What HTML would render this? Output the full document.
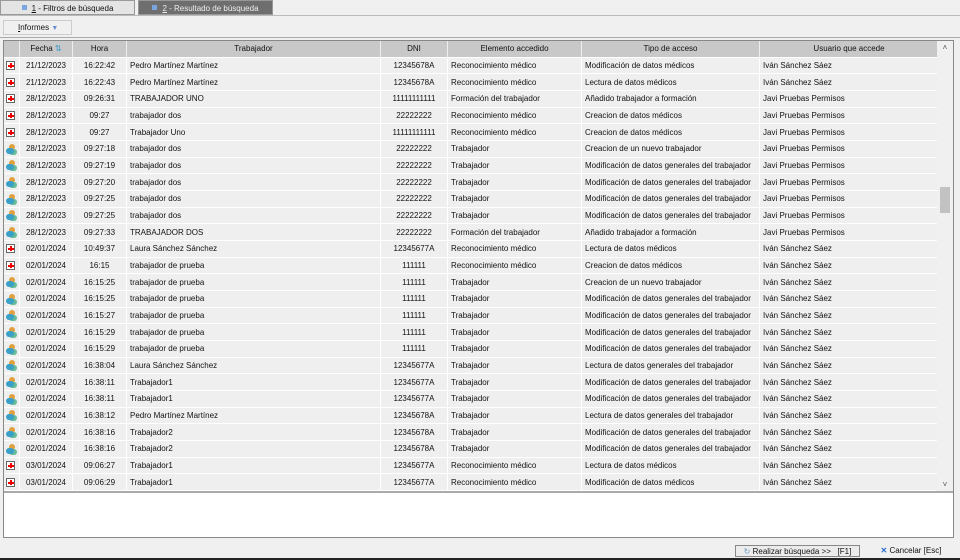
<!DOCTYPE html>
<html><head><meta charset="utf-8"><style>
*{box-sizing:border-box;margin:0;padding:0}
body{width:960px;height:560px;background:#f0f0f0;font-family:"Liberation Sans",sans-serif;font-size:8px;color:#111;position:relative;overflow:hidden}
.tab{position:absolute;top:0;height:15px;font-size:8px;line-height:15px;text-align:center;border:1px solid #999}
.sq{display:inline-block;width:5px;height:5px;background:#7aa6e0;margin-right:5px;vertical-align:1px}
#grid{position:absolute;left:3px;top:40px;width:951px;height:498px;border:1px solid #888;background:#fff}
table{border-collapse:collapse;position:absolute;left:0;top:0;table-layout:fixed}
th{background:#c8c8c8;font-weight:normal;height:16px;border-right:1px solid #eee;font-size:8px}
td{height:16.68px;background:#efefef;border-top:1px solid #fff;border-right:1px solid #fff;padding:0 3px;white-space:nowrap;overflow:hidden}
td.c{text-align:center}
.ic{width:9px;height:9px;border:1px solid #666;background:#fff;position:relative;margin-left:0}
.ic:before{content:"";position:absolute;left:3px;top:1px;width:2px;height:5px;background:#e00}
.ic:after{content:"";position:absolute;left:1px;top:3px;width:6px;height:2px;background:#e00}
.pp{width:11px;height:10px;position:relative}
.pp:before{content:"";position:absolute;left:3px;top:0;width:6px;height:6px;border-radius:3px;background:#e0a040}
.pp:after{content:"";position:absolute;left:0;top:4px;width:8px;height:6px;border-radius:3px;background:#3aa0c8;box-shadow:3px 1px 0 #6b9;}
</style></head><body>
<div class="tab" style="left:0;width:135px;background:#e4e4e4"><span class="sq"></span><u>1</u> - Filtros de búsqueda</div>
<div class="tab" style="left:138px;width:135px;background:#6e6e6e;color:#eee"><span class="sq"></span><u>2</u> - Resultado de búsqueda</div>
<div style="position:absolute;left:0;top:15px;width:960px;height:1px;background:#bbb"></div>
<div style="position:absolute;left:3px;top:20px;width:69px;height:15px;border:1px solid #ccc;background:#f0f0f0;line-height:14px;padding-left:14px"><u>I</u>nformes <span style="color:#6a8fd0;font-size:7px">▼</span></div>
<div style="position:absolute;left:0;top:37px;width:960px;height:2px;border-top:1px solid #aaa"></div>
<div id="grid">
<table>
<colgroup><col style="width:15px"><col style="width:53px"><col style="width:54px"><col style="width:254px"><col style="width:67px"><col style="width:134px"><col style="width:178px"><col style="width:179px"></colgroup>
<tr><th></th><th>Fecha <span style="color:#39c">⇅</span></th><th>Hora</th><th>Trabajador</th><th>DNI</th><th>Elemento accedido</th><th>Tipo de acceso</th><th>Usuario que accede</th></tr>
<tbody id="b"></tbody>
</table>
<div style="position:absolute;right:0;top:0;width:16px;height:450px;background:#f0f0f0">
<div style="text-align:center;font-size:8px;color:#555;margin-top:2px">˄</div>
<div style="position:absolute;left:3px;top:146px;width:10px;height:26px;background:#c2c2c2"></div>
<div style="position:absolute;bottom:2px;width:16px;text-align:center;color:#555">˅</div>
</div>
<div style="position:absolute;left:0;top:450px;width:949px;height:2px;background:#aaa"></div>
</div>
<div style="position:absolute;left:735px;top:545px;width:125px;height:12px;border:1px solid #888;background:#ececec;text-align:center;line-height:11px"><span style="color:#69c">↻</span> Realizar búsqueda &gt;&gt; &nbsp; [F1]</div>
<div style="position:absolute;left:866px;top:543px;width:90px;height:16px;background:#f0f0f0;text-align:center;line-height:16px"><span style="color:#2a6cd0;font-weight:bold">✕</span> Cancelar [Esc]</div>
<div style="position:absolute;left:0;top:558px;width:960px;height:2px;background:#222"></div>
<script>
const R=[
["m","21/12/2023","16:22:42","Pedro Martínez Martínez","12345678A","Reconocimiento médico","Modificación de datos médicos","Iván Sánchez Sáez"],
["m","21/12/2023","16:22:43","Pedro Martínez Martínez","12345678A","Reconocimiento médico","Lectura de datos médicos","Iván Sánchez Sáez"],
["m","28/12/2023","09:26:31","TRABAJADOR UNO","11111111111","Formación del trabajador","Añadido trabajador a formación","Javi Pruebas Permisos"],
["m","28/12/2023","09:27","trabajador dos","22222222","Reconocimiento médico","Creacion de datos médicos","Javi Pruebas Permisos"],
["m","28/12/2023","09:27","Trabajador Uno","11111111111","Reconocimiento médico","Creacion de datos médicos","Javi Pruebas Permisos"],
["p","28/12/2023","09:27:18","trabajador dos","22222222","Trabajador","Creacion de un nuevo trabajador","Javi Pruebas Permisos"],
["p","28/12/2023","09:27:19","trabajador dos","22222222","Trabajador","Modificación de datos generales del trabajador","Javi Pruebas Permisos"],
["p","28/12/2023","09:27:20","trabajador dos","22222222","Trabajador","Modificación de datos generales del trabajador","Javi Pruebas Permisos"],
["p","28/12/2023","09:27:25","trabajador dos","22222222","Trabajador","Modificación de datos generales del trabajador","Javi Pruebas Permisos"],
["p","28/12/2023","09:27:25","trabajador dos","22222222","Trabajador","Modificación de datos generales del trabajador","Javi Pruebas Permisos"],
["p","28/12/2023","09:27:33","TRABAJADOR DOS","22222222","Formación del trabajador","Añadido trabajador a formación","Javi Pruebas Permisos"],
["m","02/01/2024","10:49:37","Laura Sánchez Sánchez","12345677A","Reconocimiento médico","Lectura de datos médicos","Iván Sánchez Sáez"],
["m","02/01/2024","16:15","trabajador de prueba","111111","Reconocimiento médico","Creacion de datos médicos","Iván Sánchez Sáez"],
["p","02/01/2024","16:15:25","trabajador de prueba","111111","Trabajador","Creacion de un nuevo trabajador","Iván Sánchez Sáez"],
["p","02/01/2024","16:15:25","trabajador de prueba","111111","Trabajador","Modificación de datos generales del trabajador","Iván Sánchez Sáez"],
["p","02/01/2024","16:15:27","trabajador de prueba","111111","Trabajador","Modificación de datos generales del trabajador","Iván Sánchez Sáez"],
["p","02/01/2024","16:15:29","trabajador de prueba","111111","Trabajador","Modificación de datos generales del trabajador","Iván Sánchez Sáez"],
["p","02/01/2024","16:15:29","trabajador de prueba","111111","Trabajador","Modificación de datos generales del trabajador","Iván Sánchez Sáez"],
["p","02/01/2024","16:38:04","Laura Sánchez Sánchez","12345677A","Trabajador","Lectura de datos generales del trabajador","Iván Sánchez Sáez"],
["p","02/01/2024","16:38:11","Trabajador1","12345677A","Trabajador","Modificación de datos generales del trabajador","Iván Sánchez Sáez"],
["p","02/01/2024","16:38:11","Trabajador1","12345677A","Trabajador","Modificación de datos generales del trabajador","Iván Sánchez Sáez"],
["p","02/01/2024","16:38:12","Pedro Martínez Martínez","12345678A","Trabajador","Lectura de datos generales del trabajador","Iván Sánchez Sáez"],
["p","02/01/2024","16:38:16","Trabajador2","12345678A","Trabajador","Modificación de datos generales del trabajador","Iván Sánchez Sáez"],
["p","02/01/2024","16:38:16","Trabajador2","12345678A","Trabajador","Modificación de datos generales del trabajador","Iván Sánchez Sáez"],
["m","03/01/2024","09:06:27","Trabajador1","12345677A","Reconocimiento médico","Lectura de datos médicos","Iván Sánchez Sáez"],
["m","03/01/2024","09:06:29","Trabajador1","12345677A","Reconocimiento médico","Modificación de datos médicos","Iván Sánchez Sáez"]];
let h="";for(const r of R){h+=`<tr><td style="padding:0 2px"><div class="${r[0]=="m"?"ic":"pp"}"></div></td><td class="c">${r[1]}</td><td class="c">${r[2]}</td><td>${r[3]}</td><td class="c">${r[4]}</td><td>${r[5]}</td><td>${r[6]}</td><td>${r[7]}</td></tr>`}
document.getElementById("b").innerHTML=h;
</script>
</body></html>
